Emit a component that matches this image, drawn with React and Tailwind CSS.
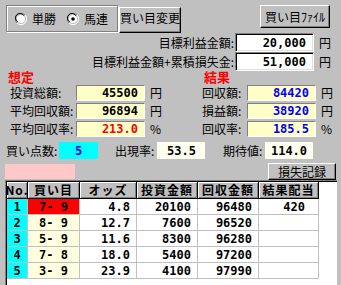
const jp = "font-['Noto_Sans_CJK_JP','Noto_Sans_CJK_SC',sans-serif]";
const num = "font-['DejaVu_Sans_Mono',monospace] font-bold text-[12px] leading-none";

const sunken =
  "border border-t-[#808080] border-l-[#808080] border-r-white border-b-white shadow-[inset_1px_1px_0_#000,inset_-1px_-1px_0_#dfdfdf]";
const softSunken = "border border-t-[#808080] border-l-[#808080] border-r-white border-b-white";
const raised =
  "border border-t-white border-l-white border-r-black border-b-black shadow-[inset_-1px_-1px_0_#808080]";

function Radio({ checked, label }) {
  return (
    <div className="flex items-center">
      <svg width="12" height="12" viewBox="0 0 12 12" className="shrink-0">
        <path d="M10 2 A5.5 5.5 0 1 0 2 10" fill="none" stroke="#808080" strokeWidth="1" />
        <path d="M9 3 A4.5 4.5 0 1 0 3 9" fill="none" stroke="#000" strokeWidth="1" />
        <circle cx="6" cy="6" r="4" fill="#fff" />
        <path d="M2 10 A5.5 5.5 0 0 0 10 2" fill="none" stroke="#fff" strokeWidth="1" />
        {checked && <circle cx="6" cy="6" r="1.8" fill="#000" />}
      </svg>
      <span className="ml-[5px]">{label}</span>
    </div>
  );
}

function Field({ label, value, color = 'text-black', unit, bg = 'bg-[#ffffc8]' }) {
  return (
    <div className="flex items-center h-[18px]">
      <span className="w-[66px] shrink-0 leading-[12px]">{label}</span>
      <div className={`w-[69px] h-[16px] ${softSunken} ${bg} flex items-center justify-end pr-[6px] ${num} ${color}`}>
        {value}
      </div>
      <span className="ml-[5px]">{unit}</span>
    </div>
  );
}

const cols = [21, 52, 57, 61, 61, 60];
const headers = ['No.', '買い目', 'オッズ', '投資金額', '回収金額', '結果配当'];
const rows = [
  ['1', '7- 9', '4.8', '20100', '96480', '420'],
  ['2', '8- 9', '12.7', '7600', '96520', ''],
  ['3', '5- 9', '11.6', '8300', '96280', ''],
  ['4', '7- 8', '18.0', '5400', '97200', ''],
  ['5', '3- 9', '23.9', '4100', '97990', ''],
];

export default function App() {
  return (
    <div className={`w-[341px] h-[285px] overflow-hidden bg-[#c0c0c0] text-black text-[12px] leading-[14px] ${jp}`}>
      {/* top row */}
      <div className="flex items-start h-[33px]">
        <div className="ml-[6px] mt-[5px] w-[112px] h-[27px] border border-[#808080] shadow-[inset_1px_1px_0_#fff,1px_1px_0_#fff] flex items-center pl-[8px] gap-[11px]">
          <Radio label="単勝" />
          <Radio checked label="馬連" />
        </div>
        <button className={`ml-[1px] mt-[7px] w-[62px] h-[26px] ${raised} bg-[#c0c0c0] flex items-center justify-center pb-[4px]`}>
          買い目変更
        </button>
        <button className={`ml-auto mr-[11px] mt-[5px] w-[70px] h-[23px] ${raised} bg-[#c0c0c0] flex items-center justify-center`}>
          買い目ﾌｧｲﾙ
        </button>
      </div>

      {/* targets */}
      {[
        ['目標利益金額:', '20,000'],
        ['目標利益金額+累積損失金:', '51,000'],
      ].map(([label, value]) => (
        <div key={label} className="flex items-center h-[19px]">
          <span className="w-[235px] text-right pr-[1px]">{label}</span>
          <div className={`w-[79px] h-[19px] bg-white ${sunken} flex items-center justify-end pr-[7px] ${num}`}>
            {value}
          </div>
          <span className="ml-[5px]">円</span>
        </div>
      ))}

      {/* 想定 / 結果 */}
      <div className="flex">
        <div className="w-[192px] pl-[8px]">
          <div className="h-[13px] text-[13px] leading-[12px] font-bold text-[#ff0000]">想定</div>
          <div className="pl-[2px]">
            <Field label="投資総額:" value="45500" unit="円" />
            <Field label="平均回収額:" value="96894" unit="円" />
            <Field label="平均回収率:" value="213.0" unit="%" color="text-[#ff0000]" />
          </div>
        </div>
        <div className="pl-[10px]">
          <div className="h-[13px] pl-[2px] text-[13px] leading-[12px] font-bold text-[#ff0000]">結果</div>
          <div className="[&>div>span:first-child]:w-[45px]">
            <Field label="回収額:" value="84420" unit="円" color="text-[#0000ff]" />
            <Field label="損益額:" value="38920" unit="円" color="text-[#0000ff]" />
            <Field label="回収率:" value="185.5" unit="%" color="text-[#0000ff]" />
          </div>
        </div>
      </div>

      {/* 買い点数 row */}
      <div className="flex items-center h-[17px] mt-[4px]">
        <span className="ml-[6px] w-[53px]">買い点数:</span>
        <div className={`w-[39px] h-[17px] bg-[#00ffff] flex items-center justify-center ${num} text-[#0000ff]`}>5</div>
        <span className="ml-[17px] w-[42px]">出現率:</span>
        <div className={`w-[48px] h-[17px] bg-[#fffff0] flex items-center justify-end pr-[9px] ${num}`}>53.5</div>
        <span className="ml-[18px] w-[42px]">期待値:</span>
        <div className={`w-[48px] h-[17px] bg-[#fffff0] flex items-center justify-center ${num}`}>114.0</div>
      </div>

      {/* pink / 損失記録 */}
      <div className="flex items-center h-[17px] mt-[4px]">
        <div className="ml-[5px] w-[70px] h-[15px] bg-[#ffc8c8]" />
        <button className={`ml-auto mr-[5px] w-[68px] h-[17px] ${raised} bg-[#c0c0c0] flex items-center justify-center text-[12px]`}>
          損失記録
        </button>
      </div>

      {/* table */}
      <div className="ml-[5px] w-[332px] h-[120px] bg-white border-t border-l border-t-[#808080] border-l-[#808080] shadow-[inset_1px_1px_0_#000] pt-[1px] pl-[1px]">
        <div className="flex h-[17px]">
          {headers.map((h, i) => (
            <div
              key={h}
              style={{ width: cols[i] }}
              className="h-[17px] bg-[#c0c0c0] border-r border-b border-black shadow-[inset_1px_1px_0_#fff,inset_-1px_-1px_0_#808080] flex items-center justify-center font-bold text-[12px] tracking-[1px]"
            >
              {h}
            </div>
          ))}
        </div>
        {rows.map((r, ri) => (
          <div key={ri} className="flex h-[16px]">
            {r.map((c, ci) => {
              let cls = 'bg-white justify-end pr-[6px]';
              if (ci === 0) cls = 'bg-[#00ffff] justify-center';
              if (ci === 1) cls = ri === 0 ? 'bg-[#ff0000] justify-center' : 'bg-[#ffffe0] justify-center';
              if (ci === 5) cls = 'bg-white justify-end pr-[13px]';
              return (
                <div
                  key={ci}
                  style={{ width: cols[ci] }}
                  className={`h-[16px] border-r border-b border-[#c0c0c0] flex items-center whitespace-pre ${num} ${cls}`}
                >
                  {c}
                </div>
              );
            })}
          </div>
        ))}
      </div>
    </div>
  );
}
